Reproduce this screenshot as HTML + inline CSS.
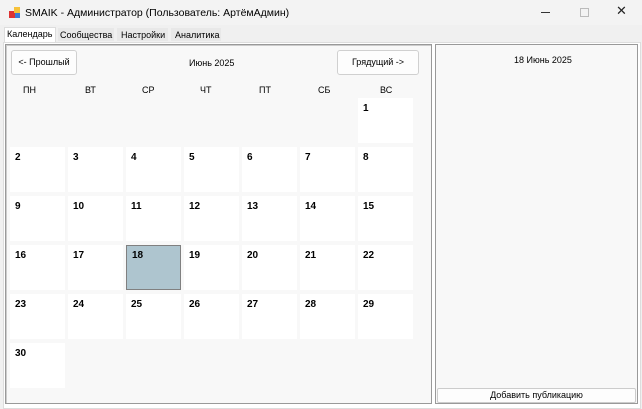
<!DOCTYPE html><html><head><meta charset="utf-8"><style>
body{margin:0;width:642px;height:409px;background:#f0f0f0;font-family:"Liberation Sans",sans-serif;font-size:9px;color:#000;position:relative;overflow:hidden}
.a{position:absolute}
.cell{position:absolute;width:55px;height:45px;background:#fff}
.cell b{position:absolute;left:5px;top:5px;font-size:10px}
.h{position:absolute;top:85px;font-size:9px}
</style></head><body>
<div class="a" style="left:0;top:0;width:642px;height:25px;background:#f3f3f3"></div>
<svg class="a" style="left:9px;top:7px" width="12" height="12"><rect x="0" y="4" width="6" height="7" fill="#d33"/><rect x="5" y="0" width="6" height="6" fill="#f6c23a"/><rect x="6" y="6" width="5" height="5" fill="#3a7bd5"/></svg>
<div class="a" style="left:25px;top:7px;font-size:10.5px">SMAIK - Администратор (Пользователь: АртёмАдмин)</div>
<div class="a" style="left:541px;top:12px;width:9px;height:1px;background:#333"></div>
<div class="a" style="left:580px;top:8px;width:7px;height:7px;border:1px solid #bbb"></div>
<div class="a" style="left:616px;top:3px;font-size:13px;color:#222">✕</div>
<div class="a" style="left:4px;top:27px;width:50px;height:15px;background:#fff;border:1px solid #ddd;border-bottom:none"></div>
<div class="a" style="left:7px;top:29px">Календарь</div>
<div class="a" style="left:58px;top:28px;width:56px;height:13px;background:#e8e8e8"></div>
<div class="a" style="left:60px;top:30px">Сообщества</div>
<div class="a" style="left:117px;top:28px;width:51px;height:13px;background:#e8e8e8"></div>
<div class="a" style="left:121px;top:30px">Настройки</div>
<div class="a" style="left:171px;top:28px;width:50px;height:13px;background:#e8e8e8"></div>
<div class="a" style="left:175px;top:30px">Аналитика</div>
<div class="a" style="left:3px;top:42px;width:636px;height:365px;background:#fff;border:1px solid #ddd"></div>
<div class="a" style="left:5px;top:44px;width:425px;height:358px;background:#f8f8f8;border:1px solid #999;box-shadow:inset 1px 1px 0 #ccc"></div>
<div class="a" style="left:435px;top:44px;width:201px;height:358px;background:#f8f8f8;border:1px solid #999"></div>
<div class="a" style="left:11px;top:50px;width:64px;height:23px;background:#fdfdfd;border:1px solid #d0d0d0;border-radius:3px;text-align:center;line-height:23px">&lt;- Прошлый</div>
<div class="a" style="left:337px;top:50px;width:80px;height:23px;background:#fdfdfd;border:1px solid #d0d0d0;border-radius:3px;text-align:center;line-height:23px">Грядущий -&gt;</div>
<div class="a" style="left:189px;top:58px">Июнь 2025</div>
<div class="a" style="left:514px;top:55px">18 Июнь 2025</div>
<div class="a" style="left:437px;top:388px;width:197px;height:13px;background:#fdfdfd;border:1px solid #ccc;border-radius:2px;text-align:center;line-height:13px">Добавить публикацию</div>
<div class="h" style="left:23px">ПН</div><div class="h" style="left:85px">ВТ</div><div class="h" style="left:142px">СР</div><div class="h" style="left:200px">ЧТ</div><div class="h" style="left:259px">ПТ</div><div class="h" style="left:318px">СБ</div><div class="h" style="left:380px">ВС</div>
<div class="cell" style="left:358px;top:98px"><b>1</b></div>
<div class="cell" style="left:10px;top:147px"><b>2</b></div><div class="cell" style="left:68px;top:147px"><b>3</b></div><div class="cell" style="left:126px;top:147px"><b>4</b></div><div class="cell" style="left:184px;top:147px"><b>5</b></div><div class="cell" style="left:242px;top:147px"><b>6</b></div><div class="cell" style="left:300px;top:147px"><b>7</b></div><div class="cell" style="left:358px;top:147px"><b>8</b></div>
<div class="cell" style="left:10px;top:196px"><b>9</b></div><div class="cell" style="left:68px;top:196px"><b>10</b></div><div class="cell" style="left:126px;top:196px"><b>11</b></div><div class="cell" style="left:184px;top:196px"><b>12</b></div><div class="cell" style="left:242px;top:196px"><b>13</b></div><div class="cell" style="left:300px;top:196px"><b>14</b></div><div class="cell" style="left:358px;top:196px"><b>15</b></div>
<div class="cell" style="left:10px;top:245px"><b>16</b></div><div class="cell" style="left:68px;top:245px"><b>17</b></div><div class="cell" style="left:126px;top:245px;width:53px;height:43px;background:#aec5cf;border:1px solid #808080"><b style="left:5px;top:4px">18</b></div><div class="cell" style="left:184px;top:245px"><b>19</b></div><div class="cell" style="left:242px;top:245px"><b>20</b></div><div class="cell" style="left:300px;top:245px"><b>21</b></div><div class="cell" style="left:358px;top:245px"><b>22</b></div>
<div class="cell" style="left:10px;top:294px"><b>23</b></div><div class="cell" style="left:68px;top:294px"><b>24</b></div><div class="cell" style="left:126px;top:294px"><b>25</b></div><div class="cell" style="left:184px;top:294px"><b>26</b></div><div class="cell" style="left:242px;top:294px"><b>27</b></div><div class="cell" style="left:300px;top:294px"><b>28</b></div><div class="cell" style="left:358px;top:294px"><b>29</b></div>
<div class="cell" style="left:10px;top:343px"><b>30</b></div>
</body></html>
